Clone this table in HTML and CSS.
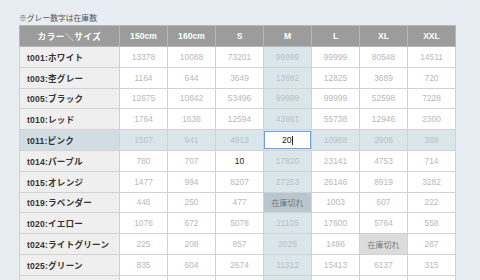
FILE: index.html
```html
<!DOCTYPE html>
<html lang="ja">
<head>
<meta charset="utf-8">
<link rel="stylesheet" href="styles.css">
</head>
<body>
<div class="wrap">
  <p class="note">※グレー数字は在庫数</p>
  <table class="stock">
    <colgroup>
      <col class="c-name"><col class="c-size"><col class="c-size"><col class="c-size"><col class="c-size"><col class="c-size"><col class="c-size"><col class="c-size">
    </colgroup>
    <thead>
      <tr><th>カラー＼サイズ</th><th>150cm</th><th>160cm</th><th>S</th><th>M</th><th>L</th><th>XL</th><th>XXL</th></tr>
    </thead>
    <tbody>
      <tr><td class="name">t001:ホワイト</td><td>13378</td><td>10088</td><td>73201</td><td class="hl">99999</td><td>99999</td><td>80548</td><td>14511</td></tr>
      <tr><td class="name">t003:杢グレー</td><td>1164</td><td>644</td><td>3649</td><td class="hl">13882</td><td>12825</td><td>3689</td><td>720</td></tr>
      <tr><td class="name">t005:ブラック</td><td>12675</td><td>10842</td><td>53496</td><td class="hl">99999</td><td>99999</td><td>52598</td><td>7228</td></tr>
      <tr><td class="name">t010:レッド</td><td>1764</td><td>1636</td><td>12594</td><td class="hl">43881</td><td>55738</td><td>12946</td><td>2300</td></tr>
      <tr class="row-hl"><td class="name">t011:ピンク</td><td>1507</td><td>941</td><td>4913</td><td class="hl edit"><span class="input">20<span class="caret"></span></span></td><td>10988</td><td>2906</td><td>389</td></tr>
      <tr><td class="name">t014:パープル</td><td>780</td><td>707</td><td class="val">10</td><td class="hl">17820</td><td>23141</td><td>4753</td><td>714</td></tr>
      <tr><td class="name">t015:オレンジ</td><td>1477</td><td>994</td><td>8207</td><td class="hl">27253</td><td>26146</td><td>8919</td><td>3282</td></tr>
      <tr><td class="name">t019:ラベンダー</td><td>448</td><td>250</td><td>477</td><td class="hl out-hl">在庫切れ</td><td>1003</td><td>607</td><td>222</td></tr>
      <tr><td class="name">t020:イエロー</td><td>1076</td><td>672</td><td>5078</td><td class="hl">21105</td><td>17600</td><td>5764</td><td>558</td></tr>
      <tr><td class="name">t024:ライトグリーン</td><td>225</td><td>208</td><td>857</td><td class="hl">2025</td><td>1486</td><td class="out">在庫切れ</td><td>287</td></tr>
      <tr><td class="name">t025:グリーン</td><td>835</td><td>604</td><td>2674</td><td class="hl">11312</td><td>15413</td><td>6137</td><td>315</td></tr>
      <tr><td class="name"></td><td></td><td></td><td></td><td class="hl"></td><td></td><td></td><td></td></tr>
    </tbody>
  </table>
</div>
</body>
</html>
```

FILE: styles.css
```css
html, body {
  margin: 0;
  padding: 0;
  background: #e8ecf3;
  overflow: hidden;
}
body {
  font-family: "Liberation Sans", "Noto Sans CJK JP", sans-serif;
  color: #333;
}
.wrap {
  padding: 12px 0 0 19px;
}
.note {
  margin: 0;
  font-size: 7.8px;
  line-height: 13px;
  color: #555;
}
.stock {
  border-collapse: collapse;
  table-layout: fixed;
  width: 436px;
  background: #fff;
}
.c-name { width: 100px; }
.c-size { width: 48px; }
.stock th, .stock td {
  height: 20.8px;
  padding: 0;
  text-align: center;
  border: 1px solid #d2d2d2;
  box-sizing: border-box;
  white-space: nowrap;
}
.stock th {
  height: 21px;
  background: #9c9c9c;
  color: #fff;
  font-size: 8.6px;
  font-weight: bold;
  border-color: #b8b8b8;
}
.stock th:first-child {
  letter-spacing: 0.6px;
}
.stock td {
  font-size: 8.4px;
  color: #b9b9b9;
}
.stock td.name {
  background: #efefef;
  color: #333;
  font-weight: bold;
  text-align: left;
  padding-left: 7px;
  font-size: 8.6px;
  letter-spacing: 0.2px;
}
.stock td.hl {
  background: #dbe6eb;
  color: #b6c2c8;
}
.row-hl td {
  background: #dbe6eb;
  color: #b6c2c8;
}
.row-hl td.name {
  background: #d1dde3;
}
.stock td.val {
  color: #222;
}
.stock td.out-hl {
  background: #b9c6cd;
  color: #6b767c;
  font-size: 8px;
}
.stock td.out {
  background: #dcdcdc;
  color: #7a7a7a;
  font-size: 8px;
}
.stock td.edit {
  position: relative;
}
.input {
  position: absolute;
  left: 0;
  right: 0;
  top: 1px;
  bottom: 1px;
  background: #fff;
  border: 1.5px solid #6c9fe6;
  color: #222;
  display: flex;
  align-items: center;
  justify-content: center;
  font-size: 8.6px;
}
.caret {
  display: inline-block;
  width: 1px;
  height: 9px;
  background: #222;
  margin-left: 0.5px;
}
```
